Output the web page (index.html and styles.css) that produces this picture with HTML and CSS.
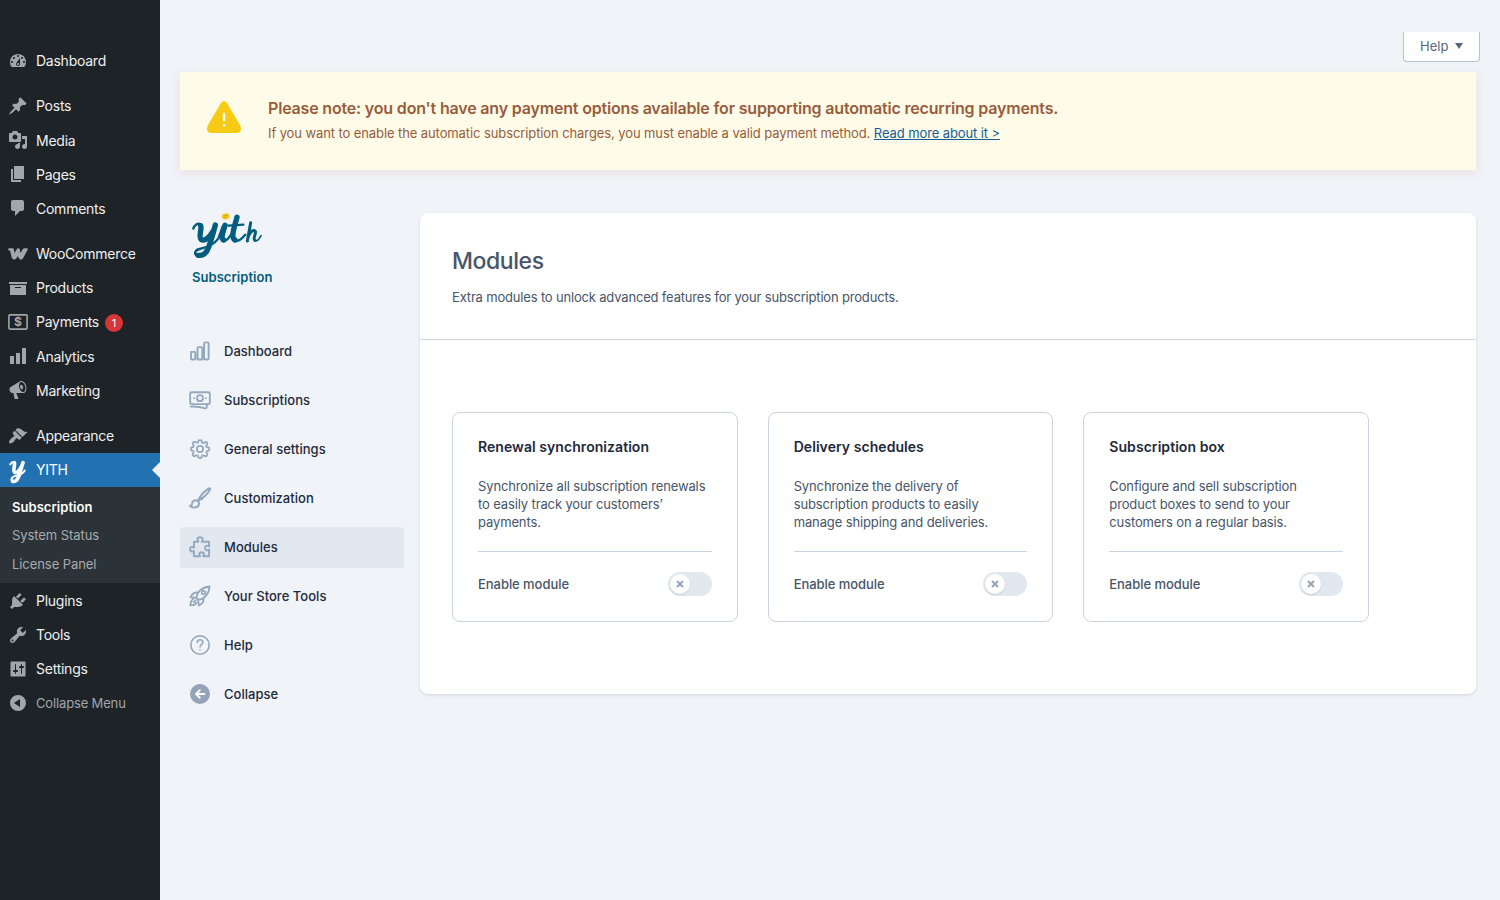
FILE: index.html
```html
<!DOCTYPE html>
<html lang="en">
<head>
<meta charset="utf-8">
<title>Modules</title>
<link rel="stylesheet" href="styles.css">
</head>
<body>
<div class="app">
  <aside class="admin">
    <a class="item"><svg viewBox="0 0 20 20"><path fill-rule="evenodd" d="M3.76 16h12.48c1.1-1.37 1.76-3.11 1.76-5 0-4.42-3.58-8-8-8s-8 3.58-8 8c0 1.89.66 3.63 1.76 5zM10 4c.55 0 1 .45 1 1s-.45 1-1 1-1-.45-1-1 .45-1 1-1zM6 6c.55 0 1 .45 1 1s-.45 1-1 1-1-.45-1-1 .45-1 1-1zm8 0c.55 0 1 .45 1 1s-.45 1-1 1-1-.45-1-1 .45-1 1-1zm-5.370 5.550L12 7v6c0 1.100-.9 2-2 2s-2-.9-2-2c0-.57.24-1.080.63-1.450zM4 10c.55 0 1 .45 1 1s-.45 1-1 1-1-.45-1-1 .45-1 1-1zm12 0c.55 0 1 .45 1 1s-.45 1-1 1-1-.45-1-1 .45-1 1-1zm-5 3c0-.55-.45-1-1-1s-1 .45-1 1 .45 1 1 1 1-.45 1-1z"/></svg><span>Dashboard</span></a>
    <div class="sep"></div>
    <a class="item"><svg viewBox="0 0 20 20"><path d="M10.440 3.020l1.820-1.820 6.360 6.350-1.830 1.820c-1.050-.68-2.480-.57-3.410.36l-.75.75c-.92.93-1.040 2.350-.35 3.410l-1.830 1.820-2.410-2.410-2.800 2.790c-.42.42-3.380 2.710-3.800 2.290s1.860-3.390 2.280-3.810l2.790-2.790L4.100 9.360l1.830-1.820c1.050.69 2.480.57 3.400-.36l.75-.75c.93-.92 1.050-2.350.36-3.410z"/></svg><span>Posts</span></a>
    <a class="item"><svg viewBox="0 0 20 20"><path fill-rule="evenodd" d="M13 11V4c0-.55-.45-1-1-1h-1.670L9 1H5L3.670 3H2c-.55 0-1 .45-1 1v7c0 .55.45 1 1 1h10c.55 0 1-.45 1-1zM7 4.500c1.380 0 2.500 1.120 2.500 2.500S8.380 9.500 7 9.500 4.500 8.380 4.500 7 5.620 4.500 7 4.500zM14 6h5v10.500c0 1.380-1.120 2.500-2.500 2.500S14 17.880 14 16.500s1.120-2.500 2.500-2.500c.17 0 .34.02.5.05V9h-3V6zm-4 8.050V13h2v3.500c0 1.380-1.120 2.500-2.500 2.500S7 17.880 7 16.500 8.120 14 9.500 14c.17 0 .34.02.5.05z"/></svg><span>Media</span></a>
    <a class="item"><svg viewBox="0 0 20 20"><path d="M6 15V2h10v13H6zm-1 1h8v2H3V5h2v11z"/></svg><span>Pages</span></a>
    <a class="item"><svg viewBox="0 0 20 20"><path d="M5 2h9c1.100 0 2 .9 2 2v7c0 1.100-.9 2-2 2h-2l-5 5v-5H5c-1.100 0-2-.9-2-2V4c0-1.100.9-2 2-2z"/></svg><span>Comments</span></a>
    <div class="sep"></div>
    <a class="item"><svg viewBox="0 0 20 20"><path d="M0 5.200Q.2 4.300 1.500 4.300H4.500Q5.700 4.300 5.900 5.500L6.600 9 8.700 5.200Q9.200 4.300 10.400 4.300Q11.500 4.300 11.800 5.500L12.600 9 14.700 5.200Q15.200 4.300 16.500 4.300H19Q20.300 4.600 19.500 6L14.900 14.400Q14 15.700 12.600 15.600Q11.200 15.400 10.700 14L9.800 11.900 8.600 14Q7.600 15.700 6 15.600Q4.200 15.500 3.700 13.500L2.200 7.200Q1.900 6.500 1 6.300Q0 6 0 5.200z"/></svg><span>WooCommerce</span></a>
    <a class="item"><svg viewBox="0 0 20 20"><path fill-rule="evenodd" d="M19 4v2H1V4h18zM2 7h16v10H2V7zm11 3V9H7v1h6z"/></svg><span>Products</span></a>
    <a class="item"><svg viewBox="0 0 20 20"><rect class="line" x=".9" y="2.900" width="18.200" height="14.200" rx="1"/><text class="dollar" x="10" y="14.300">$</text></svg><span>Payments</span><b class="badge">1</b></a>
    <a class="item"><svg viewBox="0 0 20 20"><path d="M18 18V2h-4v16h4zm-6 0V7H8v11h4zm-6 0v-8H2v8h4z"/></svg><span>Analytics</span></a>
    <a class="item"><svg viewBox="0 0 20 20"><path fill-rule="evenodd" d="M18.150 5.940c.46 1.620.38 3.220-.02 4.480-.42 1.280-1.260 2.180-2.300 2.480-.16.06-.26.06-.4.06-.06.02-.12.02-.18.02-.06.02-.14.02-.22.02h-6.800l2.220 5.500c.02.14-.06.26-.14.34-.08.1-.24.16-.34.16H6.950c-.1 0-.26-.06-.34-.16-.08-.08-.16-.2-.14-.34l-1-5.500H4.250l-.02-.02c-.5.06-1.080-.18-1.540-.62s-.88-1.080-1.060-1.880c-.24-.8-.2-1.560-.02-2.200.18-.62.58-1.080 1.060-1.300l.02-.02 9-5.400c.1-.06.18-.1.24-.16.06-.04.14-.08.24-.12.16-.08.28-.12.5-.18 1.040-.3 2.240.1 3.220.98s1.840 2.240 2.260 3.860zm-2.580 5.980h-.02c.4-.1.74-.34 1.040-.7.58-.7.86-1.760.86-3.040 0-.64-.1-1.300-.28-1.980-.34-1.360-1.020-2.500-1.780-3.240s-1.680-1.100-2.460-.88c-.82.22-1.400.96-1.700 2-.32 1.040-.28 2.360.06 3.720.38 1.360 1 2.500 1.800 3.240.78.74 1.620 1.100 2.480.88zm-2.540-7.080c.22-.04.42-.02.62.04.38.16.76.48 1.020 1s.42 1.200.42 1.780c0 .3-.04.56-.12.8-.18.48-.44.84-.86.94-.34.1-.8-.06-1.140-.4s-.64-.86-.78-1.500c-.18-.62-.12-1.240.02-1.720s.48-.84.82-.94z"/></svg><span>Marketing</span></a>
    <div class="sep"></div>
    <a class="item"><svg viewBox="0 0 20 20"><path d="M14.480 11.060L7.410 3.990l1.500-1.500c.5-.56 2.300-.47 3.510.32 1.210.8 1.430 1.280 2.910 2.100 1.180.64 2.450 1.260 4.450.85zm-.71.71L6.700 4.700 4.930 6.470c-.39.39-.39 1.020 0 1.410l1.060 1.060c.39.39.39 1.030 0 1.420-.6.6-1.430 1.110-2.210 1.690-.35.26-.7.53-1.010.84C1.430 14.230.4 16.080 1.400 17.070c.99 1 2.840-.03 4.180-1.360.31-.31.58-.66.85-1.020.57-.78 1.080-1.610 1.690-2.210.39-.39 1.020-.39 1.410 0l1.060 1.060c.39.39 1.020.39 1.410 0z"/></svg><span>Appearance</span></a>
    <a class="item current"><svg class="ymark" viewBox="0 0 54 72"><path class="s1" d="M4 13C8 6 12 5 16 7"/><path class="s2" d="M16 8C19 16 10 32 17 37C25 41 33 29 37 20M42 8C37 22 34 36 29 50C25 60 19 66 11 64"/><path class="s1" d="M11 64C4 60 8 51 17 49C30 46 40 43 47 32"/></svg><span>YITH</span></a>
    <div class="sub"><a class="on">Subscription</a><a>System Status</a><a>License Panel</a></div>
    <a class="item"><svg viewBox="0 0 20 20"><path d="M13.110 4.360L9.870 7.600 8 5.730l3.240-3.240c.35-.34 1.050-.2 1.560.32.52.51.66 1.210.31 1.550zm-8 1.770l.91-1.120 9.010 9.010-1.190.84c-.71.71-2.630 1.160-3.820 1.160H6.140L4.900 17.260c-.59.59-1.540.59-2.120 0-.59-.58-.59-1.530 0-2.120l1.240-1.240v-3.880c0-1.130.4-3.190 1.090-3.890zm7.260 3.970l3.240-3.240c.34-.35 1.040-.21 1.550.31.52.51.66 1.210.31 1.550l-3.240 3.250z"/></svg><span>Plugins</span></a>
    <a class="item"><svg viewBox="0 0 20 20"><path fill-rule="evenodd" d="M16.680 9.770c-1.340 1.340-3.300 1.670-4.950.99l-5.410 6.520c-.99.99-2.590.99-3.580 0s-.99-2.590 0-3.570l6.520-5.420c-.68-1.650-.35-3.610.99-4.950 1.280-1.280 3.120-1.620 4.720-1.060l-2.890 2.890 2.820 2.820 2.860-2.870c.53 1.580.18 3.390-1.080 4.650zM3.810 16.210c.4.39 1.040.39 1.430 0 .4-.4.4-1.040 0-1.430-.39-.4-1.030-.4-1.430 0-.39.39-.39 1.030 0 1.430z"/></svg><span>Tools</span></a>
    <a class="item"><svg viewBox="0 0 20 20"><path fill-rule="evenodd" d="M17.500 16.500V3.500c0-.6-.4-1-1-1h-13c-.6 0-1 .4-1 1v13c0 .6.4 1 1 1h13c.6 0 1-.4 1-1zM8 11h1c.55 0 1 .45 1 1s-.45 1-1 1H8v1.500c0 .28-.22.5-.5.5s-.5-.22-.5-.5V13H6c-.55 0-1-.45-1-1s.45-1 1-1h1V5.500c0-.28.22-.5.5-.5s.5.22.5.5V11zm5-2h-1c-.55 0-1-.45-1-1s.45-1 1-1h1V5.500c0-.28.22-.5.5-.5s.5.22.5.5V7h1c.55 0 1 .45 1 1s-.45 1-1 1h-1v5.500c0 .28-.22.5-.5.5s-.5-.22-.5-.5V9z"/></svg><span>Settings</span></a>
    <a class="item collapse"><svg viewBox="0 0 20 20"><path fill-rule="evenodd" d="M10 2a8 8 0 1 0 0 16a8 8 0 1 0 0-16zM12 6v8l-6-4z"/></svg><span>Collapse Menu</span></a>
  </aside>

  <main class="main">
    <div class="top"><div class="helptab">Help<i class="tri"></i></div></div>
    <section class="notice">
      <svg class="warn" viewBox="0 0 36 34"><path class="body" d="M15 3Q18-1 21 3L34 25Q37 32 31 33H5Q-1 32 2 25z"/><path class="mark" d="M18 14V20M18 25V25.200"/></svg>
      <div><h2>Please note: you don't have any payment options available for supporting automatic recurring payments.</h2>
      <p>If you want to enable the automatic subscription charges, you must enable a valid payment method. <a>Read more about it &gt;</a></p></div>
    </section>
    <div class="cols">
      <nav class="nav">
        <svg class="logo" viewBox="30 33 222 150"><path class="s1" d="M40 86C43 75 53 68 62 73"/><path class="s2" d="M62 77C66 88 55 110 63 118C74 126 90 110 99 94M106 75C101 95 94 118 86 142C79 161 68 168 54 166"/><path class="s1" d="M54 168C40 164 44 150 59 147C84 142 103 132 115 116L128 80"/><path class="s2" d="M135 76C130 94 121 115 131 120M171 52C164 77 151 113 165 120"/><path class="s1" d="M131 122C140 125 149 111 155 101M165 122C176 126 186 115 196 104M145 77L190 74"/><path class="s3" d="M212 68L202 123M204 113C209 96 221 86 226 94C229 102 217 117 225 121"/><path class="s1 thin" d="M225 122C233 125 239 115 243 107"/><ellipse class="dot" cx="137" cy="49" rx="12" ry="9" transform="rotate(-15 137 49)"/><path class="seed" d="M132 46l4 2M139 45l4 2M134 53l5-1"/></svg>
        <div class="brand">Subscription</div>
        <div class="links">
          <a><svg viewBox="1.400 1.600 21 21"><path d="M2.500 13H6q1 0 1 1v6q0 1-1 1H3.500q-1 0-1-1v-6q0-1 1-1zM10.500 8h2.500q1.300 0 1.300 1.300V21H9.300V9.300Q9.300 8 10.500 8zM17.500 3h2.200Q21 3 21 4.300v15.400q0 1.300-1.300 1.300h-2.200q-1.300 0-1.300-1.300V4.300Q16.200 3 17.500 3z"/></svg>Dashboard</a>
          <a><svg viewBox="1 1 22 22"><rect x="1.200" y="3.500" width="21.600" height="13" rx="1.500"/><circle cx="12" cy="10" r="3.300"/><path d="M5.500 10h.1M18.400 10h.1M1.700 19.200c6-.3 11.300.5 16 1.900 1 .3 1.800-.4 1.800-1.400v-3"/></svg>Subscriptions</a>
          <a><svg viewBox="1 1 22 22"><path d="M10.300 2.800Q12 1.700 13.700 2.800L14.300 5Q16.200 5.800 18.500 4.100Q20 4.600 20.100 6.500Q18.500 8.400 19 9.700Q20 10 22 10.700Q22.500 12 22 13.500L19.300 14.500Q18.600 16.400 20.100 18.100Q19.700 19.800 17.900 20.100Q15.600 18.600 14.300 19.200L13.500 21.500Q12 22.300 10.400 21.500L9.600 19.200Q7.700 18.500 5.900 20.100Q4 19.700 3.900 17.900Q5.400 15.500 4.800 14.300L2.400 13.500Q1.600 12 2.400 10.500L4.800 9.700Q5.500 7.700 3.900 5.900Q4.300 4 6.100 3.900Q8.300 5.500 9.700 4.900z"/><circle cx="12" cy="12" r="3.400"/></svg>General settings</a>
          <a><svg viewBox="1.700 1.800 20.600 20.600"><path d="M9.500 15.300C12.500 9.500 17.200 4.500 21.300 2.200c1-.4 1.500.2 1.100 1.100-2.200 4.200-7.200 9-13 12zM9.500 15.300c-2.200-1.800-5.400-.6-5.600 2.300 0 1.800-1 2.500-2.400 2.400 2.400 3 8.800 2.200 9.500-1.500.3-1.400-.2-2.500-1.500-3.200zM12 10.800c1.400.8 2 1.600 2.300 2.500"/></svg>Customization</a>
          <a class="active"><svg viewBox="1.300 1.500 21.200 21.200"><path d="M5.500 6.500h4.700c0-1-1-1.400-1-2.500 0-3 5.600-3 5.600 0 0 1.100-1 1.500-1 2.500h7.700v5c-.9 0-1.200-.8-2.200-.8-2.600 0-2.600 5 0 5 1 0 1.300-.8 2.200-.8v7h-6.200c0-1 .8-1.400.8-2.300 0-2.500-5-2.500-5 0 0 .9.8 1.300.8 2.300H5.500v-5.700c-.9 0-1.200.8-2.100.8-2.600 0-2.600-5 0-5 .9 0 1.200.8 2.100.8z"/></svg>Modules</a>
          <a><svg viewBox="1.200 1.200 21.600 21.600"><path d="M8.300 14.500C8.500 7.500 14 2.500 22.300 1.700c-.6 8.500-5.600 13.700-12.300 14.300zM8.700 8.200C5.500 8 3.400 10 1.700 13.200l6.600 1M15.800 15c.4 3.300-1.800 5.600-5 7.200l-1-6M4.500 15.500c-2.200 1-2.700 3.500-2.800 6.500 3 .1 5.500-.6 6.400-2.800M5.200 18.700l1.800-1.800"/><circle cx="15.800" cy="8.300" r="1.900"/></svg>Your Store Tools</a>
          <a><svg viewBox="0 0 24 24"><circle class="fine" cx="12" cy="12" r="11"/><path class="fine" d="M8.700 9c.2-4.300 6.800-4.300 6.800-.3 0 2.600-3.500 2.500-3.500 5.600M12 17.700v.2"/></svg>Help</a>
          <a><svg viewBox="0 0 24 24"><circle class="full" cx="12" cy="12" r="12"/><path class="arrow" d="M17.300 12H7.500M11.700 7.500L7.200 12l4.500 4.500"/></svg>Collapse</a>
        </div>
      </nav>
      <section class="panel">
        <header><h1>Modules</h1><p>Extra modules to unlock advanced features for your subscription products.</p></header>
        <div class="cards">
          <article class="card"><h3>Renewal synchronization</h3><p>Synchronize all subscription renewals<br>to easily track your customers’<br>payments.</p><div class="foot"><span>Enable module</span><div class="toggle"><i><svg viewBox="0 0 8 8"><path d="M1 1l6 6M7 1L1 7"/></svg></i></div></div></article>
          <article class="card"><h3>Delivery schedules</h3><p>Synchronize the delivery of<br>subscription products to easily<br>manage shipping and deliveries.</p><div class="foot"><span>Enable module</span><div class="toggle"><i><svg viewBox="0 0 8 8"><path d="M1 1l6 6M7 1L1 7"/></svg></i></div></div></article>
          <article class="card"><h3>Subscription box</h3><p>Configure and sell subscription<br>product boxes to send to your<br>customers on a regular basis.</p><div class="foot"><span>Enable module</span><div class="toggle"><i><svg viewBox="0 0 8 8"><path d="M1 1l6 6M7 1L1 7"/></svg></i></div></div></article>
        </div>
      </section>
    </div>
  </main>
</div>
</body>
</html>
```
FILE: styles.css
```css
* { box-sizing: border-box; }
body { margin: 0; background: #f0f3f8; font-family: Inter, "Liberation Sans", sans-serif; font-size: 13px; color: #475569; }
h1, h2, h3, p { margin: 0; }
.app { display: flex; height: 900px; overflow: hidden; }

.admin { width: 160px; flex: none; background: #1d2327; padding-top: 43.550px; }
.item { display: flex; align-items: center; height: 34.200px; padding-left: 8px; color: #f0f0f1; font-size: 14px; letter-spacing: -.25px; }
.item svg { width: 20px; height: 20px; margin-right: 8px; fill: #a1a5ac; flex: none; }
.item .line { fill: none; stroke: #a1a5ac; stroke-width: 1.600; }
.item .dollar { font: bold 12px Inter, sans-serif; text-anchor: middle; letter-spacing: 0; }
.sep { height: 11px; }
.badge { width: 18px; height: 18px; border-radius: 9px; margin: 2px 0 0 6px; background: #d63638; color: #fff; font-size: 11px; font-weight: 400; line-height: 18px; text-align: center; letter-spacing: 0; }
.current { background: #2271b1; color: #fff; position: relative; }
.current::after { content: ""; position: absolute; right: 0; top: 9px; border: 8px solid transparent; border-left: 0; border-right-color: #f0f0f1; }
.item .ymark { width: 18px; height: 24px; margin: 5px 9px 0 1px; }
.ymark path { fill: none; stroke: #fff; stroke-linecap: round; }
.ymark .s1 { stroke-width: 6; }
.ymark .s2 { stroke-width: 11; }
.sub { height: 96.700px; background: #2c3338; padding: 6px 12px; }
.sub a { display: block; height: 28.500px; line-height: 28.500px; color: #a7aaad; letter-spacing: -.07px; }
.sub .on { color: #fff; font-weight: 600; letter-spacing: .05px; }
.collapse { color: #a1a5ac; font-size: 13px; letter-spacing: -.15px; height: 33.400px; }

.main { flex: 1; padding-left: 20px; }
.top { height: 72px; padding: 32px 20px 0 0; display: flex; justify-content: flex-end; }
.helptab { width: 77px; height: 30px; display: flex; align-items: center; padding: 0 0 1px 16px; background: #fff; border: 1px solid #b9c1cd; border-top: 0; border-radius: 0 0 4px 4px; letter-spacing: 0; color: #596678; }
.tri { margin-left: 7px; border: 4px solid transparent; border-top: 6px solid #596678; border-bottom: 0; }
.notice { width: 1296px; height: 98px; background: #fefbe8; box-shadow: 0 3px 10px rgba(220, 150, 150, .2); display: flex; padding: 26px 0 0 26px; color: #985d3d; }
.warn { width: 36px; height: 34px; margin: 2px 26px 0 0; }
.warn .body { fill: #f7cb15; }
.warn .mark { stroke: #fff; stroke-width: 2.500; stroke-linecap: round; }
.notice h2 { font-size: 16px; line-height: 20px; font-weight: 600; letter-spacing: -.18px; }
.notice p { margin-top: 6px; line-height: 18px; letter-spacing: -.097px; }
.notice a { color: #135e96; text-decoration: underline; }
.cols { display: flex; align-items: flex-start; padding-top: 43px; }
.nav { width: 240px; flex: none; margin-top: -2px; }
.logo { display: block; width: 74px; height: 50px; margin-left: 10px; fill: none; stroke: #025c7d; stroke-linecap: round; stroke-linejoin: round; }
.logo .s1 { stroke-width: 7; }
.logo .s2 { stroke-width: 16; }
.logo .s3 { stroke-width: 9; }
.logo .thin { stroke-width: 5; }
.logo .dot { fill: #f4c61a; stroke: none; }
.logo .seed { stroke: #bd9830; stroke-width: 2; }
.brand { margin: 7px 0 0 12px; line-height: 18px; font-weight: 600; color: #025c7d; letter-spacing: .05px; }
.links { margin-top: 45px; width: 224px; display: flex; flex-direction: column; gap: 8px; }
.links a { height: 41px; display: flex; align-items: center; padding: 0 0 1px 10px; border-radius: 4px; color: #1e293b; font-weight: 500; letter-spacing: .03px; }
.links .active { background: #e1e8f0; }
.links svg { width: 20px; height: 20px; margin-right: 14px; overflow: visible; fill: none; stroke: #94a8be; stroke-width: 2; stroke-linecap: round; stroke-linejoin: round; }
.links .fine { stroke-width: 1.900; }
.links .full { fill: #94a3b8; stroke: none; }
.links .arrow { stroke: #fff; stroke-width: 2.200; }

.panel { width: 1056px; height: 481px; background: #fff; border-radius: 8px; box-shadow: 0 1px 3px rgba(30, 41, 59, .14); }
.panel header { height: 127px; padding: 33px 32px 0; border-bottom: 1px solid #cbd5e1; }
.panel h1 { font-size: 23px; line-height: 30px; font-weight: 500; letter-spacing: -.43px; }
.panel header p { margin-top: 12px; line-height: 18px; letter-spacing: -.175px; }
.cards { display: grid; grid-template-columns: repeat(3, 285.670px); gap: 30px; padding: 72px 32px; }
.card { height: 210px; border: 1px solid #cbd5e1; border-radius: 8px; padding: 24px 25px; }
.card h3 { font-size: 14px; line-height: 20px; font-weight: 600; color: #1e293b; letter-spacing: .06px; }
.card p { margin-top: 20px; line-height: 18px; white-space: nowrap; letter-spacing: -.125px; }
.foot { margin-top: 20px; border-top: 1px solid #cbd5e1; padding-top: 20px; display: flex; justify-content: space-between; align-items: center; font-weight: 500; letter-spacing: -.05px; }
.toggle { width: 44px; height: 24px; padding: 2px; border-radius: 12px; background: #e2e8f0; }
.toggle i { width: 20px; height: 20px; border-radius: 10px; background: #fff; display: flex; align-items: center; justify-content: center; box-shadow: 0 1px 2px rgba(0, 0, 0, .12); }
.toggle svg { width: 8px; height: 8px; stroke: #94a3b8; stroke-width: 2; }
```
